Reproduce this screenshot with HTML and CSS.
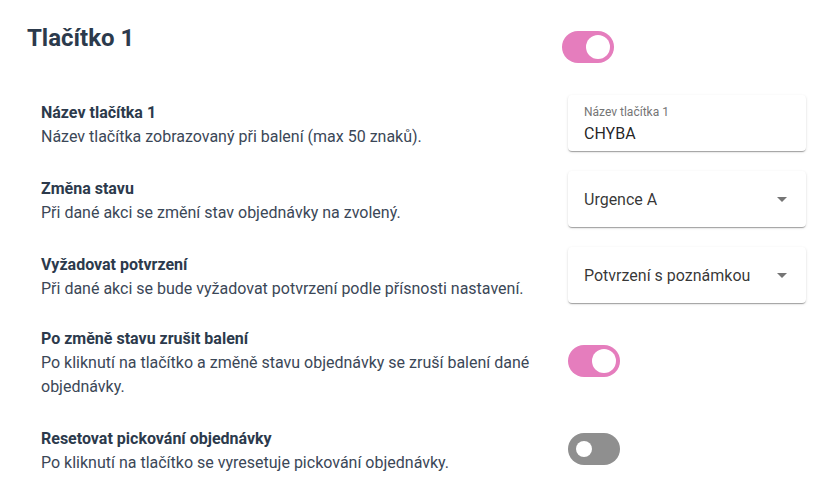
FILE: index.html
```html
<!DOCTYPE html>
<html lang="cs">

<head>
    <meta charset="UTF-8">
    <meta name="viewport" content="width=device-width, initial-scale=1.0">
    <title>Tlačítko 1</title>
    <link rel="stylesheet" href="styles.css">
</head>

<body>
    <div class="panel">
        <!-- hlavička tlačítka -->
        <div class="panel-head">
            <h1>Tlačítko 1</h1>
            <span class="switch switch-on"><span class="knob"></span></span>
        </div>

        <div class="rows">
            <div class="row">
                <div class="row-text">
                    <div class="row-label">Název tlačítka 1</div>
                    <div class="row-desc">Název tlačítka zobrazovaný při balení (max 50 znaků).</div>
                </div>
                <div class="field">
                    <div class="field-label">Název tlačítka 1</div>
                    <div class="field-value">CHYBA</div>
                </div>
            </div>

            <div class="row">
                <div class="row-text">
                    <div class="row-label">Změna stavu</div>
                    <div class="row-desc">Při dané akci se změní stav objednávky na zvolený.</div>
                </div>
                <div class="field select">
                    <span>Urgence A</span>
                    <span class="caret"></span>
                </div>
            </div>

            <div class="row">
                <div class="row-text">
                    <div class="row-label">Vyžadovat potvrzení</div>
                    <div class="row-desc">Při dané akci se bude vyžadovat potvrzení podle přísnosti nastavení.</div>
                </div>
                <div class="field select">
                    <span>Potvrzení s poznámkou</span>
                    <span class="caret"></span>
                </div>
            </div>

            <div class="row">
                <div class="row-text">
                    <div class="row-label">Po změně stavu zrušit balení</div>
                    <div class="row-desc">Po kliknutí na tlačítko a změně stavu objednávky se zruší balení dané objednávky.</div>
                </div>
                <span class="switch switch-on"><span class="knob"></span></span>
            </div>

            <div class="row row-last">
                <div class="row-text">
                    <div class="row-label">Resetovat pickování objednávky</div>
                    <div class="row-desc">Po kliknutí na tlačítko se vyresetuje pickování objednávky.</div>
                </div>
                <span class="switch"><span class="knob"></span></span>
            </div>
        </div>
    </div>
</body>

</html>
```

FILE: styles.css
```css
/* nastavení tlačítka */
:root {
    --text-dark: #2c3a4c;
    --text-desc: #3b4757;
    --pink: #e57dbd;
    --off: #8f8f8f;
}

body {
    margin: 0;
    background: #fff;
    font-family: Roboto, "Liberation Sans", sans-serif;
    color: var(--text-dark);
}

.panel {
    padding: 22px 25px 0 27px;
}

.panel-head {
    display: grid;
    grid-template-columns: 535px auto;
    align-items: start;
}

.panel-head h1 {
    margin: 0;
    font-size: 24px;
    line-height: 32px;
    font-weight: 700;
}

.panel-head .switch {
    margin-top: 9px;
}

.rows {
    display: flex;
    flex-direction: column;
    gap: 20px;
    margin-top: 32px;
    padding-left: 14px;
}

.row {
    display: grid;
    grid-template-columns: 527px 238px;
    align-items: center;
}

.row-last {
    margin-top: 4px;
}

.row-text {
    padding-top: 4px;
}

.row-label {
    font-size: 16px;
    line-height: 24px;
    font-weight: 700;
}

.row-desc {
    font-size: 16px;
    line-height: 24px;
    color: var(--text-desc);
    padding-right: 10px;
}

/* pole formuláře */
.field {
    box-sizing: border-box;
    height: 56px;
    padding: 9px 16px 0;
    background: #fff;
    border-radius: 4px;
    box-shadow: 0 2px 1px -1px rgba(0, 0, 0, 0.2), 0 1px 1px 0 rgba(0, 0, 0, 0.14), 0 1px 3px 0 rgba(0, 0, 0, 0.12);
}

.field-label {
    font-size: 12px;
    line-height: 16px;
    color: #757575;
}

.field-value {
    margin-top: 4px;
    font-size: 16px;
    line-height: 20px;
    color: rgba(0, 0, 0, 0.87);
}

.select {
    display: flex;
    align-items: center;
    justify-content: space-between;
    padding: 0 19px 0 16px;
    font-size: 16px;
    color: rgba(0, 0, 0, 0.8);
}

.caret {
    width: 0;
    height: 0;
    border-left: 5px solid transparent;
    border-right: 5px solid transparent;
    border-top: 5px solid #757575;
}

/* přepínač */
.switch {
    box-sizing: border-box;
    display: flex;
    align-items: center;
    width: 52px;
    height: 32px;
    padding: 0 8px;
    border-radius: 16px;
    background: var(--off);
}

.switch .knob {
    width: 16px;
    height: 16px;
    border-radius: 50%;
    background: #fff;
}

.switch-on {
    background: var(--pink);
    justify-content: flex-end;
    padding: 0 4px;
}

.switch-on .knob {
    width: 24px;
    height: 24px;
}
```
